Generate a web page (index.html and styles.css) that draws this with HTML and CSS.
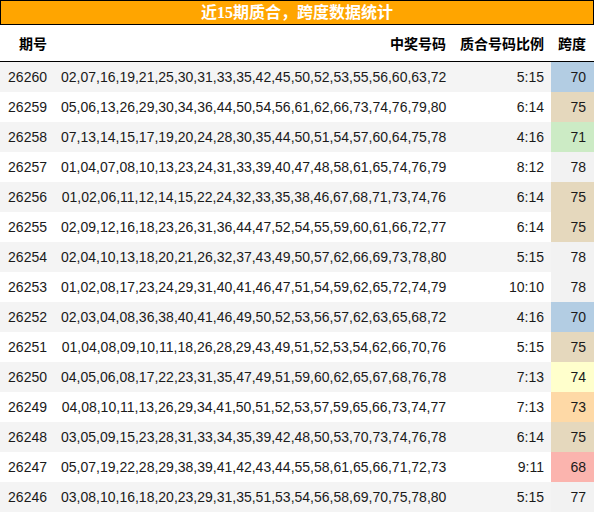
FILE: index.html
```html
<!DOCTYPE html>
<html lang="zh">
<head>
<meta charset="utf-8">
<link rel="stylesheet" href="styles.css">
</head>
<body>
<div class="title">近15期质合，跨度数据统计</div>
<table class="stats">
  <colgroup>
    <col class="c-issue">
    <col class="c-nums">
    <col class="c-ratio">
    <col class="c-span">
  </colgroup>
  <thead>
    <tr><th>期号</th><th>中奖号码</th><th>质合号码比例</th><th>跨度</th></tr>
  </thead>
  <tbody>
    <tr><td>26260</td><td>02,07,16,19,21,25,30,31,33,35,42,45,50,52,53,55,56,60,63,72</td><td>5:15</td><td class="s70">70</td></tr>
    <tr><td>26259</td><td>05,06,13,26,29,30,34,36,44,50,54,56,61,62,66,73,74,76,79,80</td><td>6:14</td><td class="s75">75</td></tr>
    <tr><td>26258</td><td>07,13,14,15,17,19,20,24,28,30,35,44,50,51,54,57,60,64,75,78</td><td>4:16</td><td class="s71">71</td></tr>
    <tr><td>26257</td><td>01,04,07,08,10,13,23,24,31,33,39,40,47,48,58,61,65,74,76,79</td><td>8:12</td><td class="s78">78</td></tr>
    <tr><td>26256</td><td>01,02,06,11,12,14,15,22,24,32,33,35,38,46,67,68,71,73,74,76</td><td>6:14</td><td class="s75">75</td></tr>
    <tr><td>26255</td><td>02,09,12,16,18,23,26,31,36,44,47,52,54,55,59,60,61,66,72,77</td><td>6:14</td><td class="s75">75</td></tr>
    <tr><td>26254</td><td>02,04,10,13,18,20,21,26,32,37,43,49,50,57,62,66,69,73,78,80</td><td>5:15</td><td class="s78">78</td></tr>
    <tr><td>26253</td><td>01,02,08,17,23,24,29,31,40,41,46,47,51,54,59,62,65,72,74,79</td><td>10:10</td><td class="s78">78</td></tr>
    <tr><td>26252</td><td>02,03,04,08,36,38,40,41,46,49,50,52,53,56,57,62,63,65,68,72</td><td>4:16</td><td class="s70">70</td></tr>
    <tr><td>26251</td><td>01,04,08,09,10,11,18,26,28,29,43,49,51,52,53,54,62,66,70,76</td><td>5:15</td><td class="s75">75</td></tr>
    <tr><td>26250</td><td>04,05,06,08,17,22,23,31,35,47,49,51,59,60,62,65,67,68,76,78</td><td>7:13</td><td class="s74">74</td></tr>
    <tr><td>26249</td><td>04,08,10,11,13,26,29,34,41,50,51,52,53,57,59,65,66,73,74,77</td><td>7:13</td><td class="s73">73</td></tr>
    <tr><td>26248</td><td>03,05,09,15,23,28,31,33,34,35,39,42,48,50,53,70,73,74,76,78</td><td>6:14</td><td class="s75">75</td></tr>
    <tr><td>26247</td><td>05,07,19,22,28,29,38,39,41,42,43,44,55,58,61,65,66,71,72,73</td><td>9:11</td><td class="s68">68</td></tr>
    <tr><td>26246</td><td>03,08,10,16,18,20,23,29,31,35,51,53,54,56,58,69,70,75,78,80</td><td>5:15</td><td class="s78">77</td></tr>
  </tbody>
</table>
</body>
</html>
```

FILE: styles.css
```css
html, body {
  margin: 0;
  padding: 0;
  background: #ffffff;
}

.title {
  width: 592px;
  height: 23px;
  line-height: 23px;
  border: 1px solid #000;
  background: #ffa500;
  color: #ffffff;
  font-family: "Liberation Serif", "Noto Sans CJK SC", serif;
  font-weight: bold;
  font-size: 16px;
  text-align: center;
}

.stats {
  width: 594px;
  table-layout: fixed;
  border-collapse: separate;
  border-spacing: 0;
  font-family: "Liberation Sans", "Noto Sans CJK SC", sans-serif;
  font-size: 14px;
  color: #1a1a1a;
}

.c-issue { width: 54px; }
.c-nums { width: 399px; }
.c-ratio { width: 98px; }
.c-span { width: 43px; }

.stats th {
  height: 36px;
  padding: 0 7px;
  text-align: right;
  vertical-align: middle;
  font-family: "Noto Sans CJK SC", sans-serif;
  font-weight: bold;
  font-size: 14px;
  color: #000;
  border-bottom: 1px solid #000;
  white-space: nowrap;
}

.stats th:last-child { padding-right: 8px; }

.stats td {
  height: 30px;
  padding: 0 7px;
  text-align: right;
  vertical-align: middle;
  white-space: nowrap;
}

.stats td:last-child { padding-right: 8px; }

.stats tbody tr:nth-child(odd) td { background: #f4f4f4; }
.stats tbody tr:nth-child(even) td { background: #ffffff; }

.stats tbody tr td.s68 { background: #fbb4ae; }
.stats tbody tr td.s70 { background: #b3cde3; }
.stats tbody tr td.s71 { background: #ccebc5; }
.stats tbody tr td.s73 { background: #fed9a6; }
.stats tbody tr td.s74 { background: #ffffcc; }
.stats tbody tr td.s75 { background: #e5d8bd; }
.stats tbody tr td.s78 { background: #f2f2f2; }
```
